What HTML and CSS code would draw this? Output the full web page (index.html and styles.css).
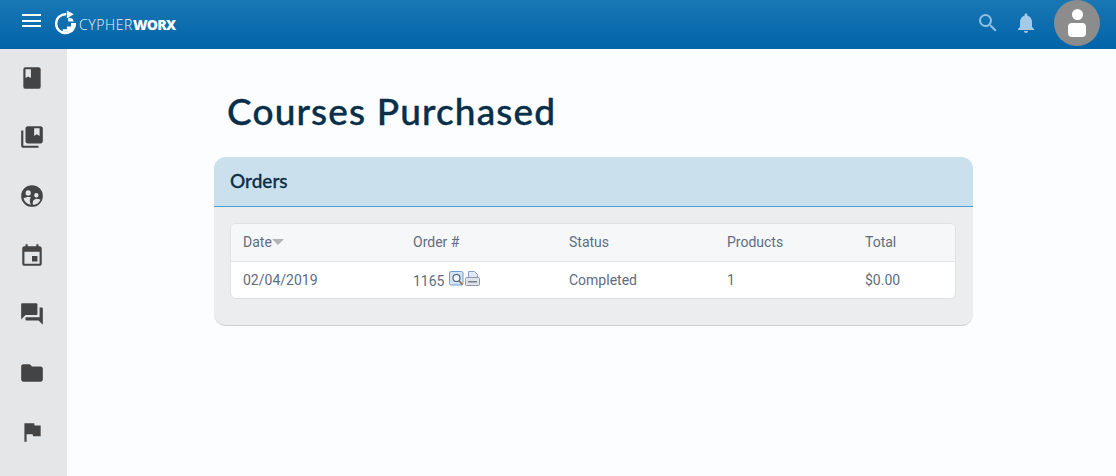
FILE: index.html
```html
<!DOCTYPE html>
<html lang="en">
<head>
<meta charset="utf-8">
<title>Courses Purchased</title>
<link rel="stylesheet" href="styles.css">
</head>
<body>
<header class="topbar">
  <div class="brand">
    <button class="burger" aria-label="Menu"><span></span><span></span><span></span></button>
    <div class="logo">
      <svg class="logo-mark" width="25" height="26" viewBox="0 0 36 36">
        <path d="M19 5.500A13.500 13.500 0 1 0 31.500 18" fill="none" stroke="#fff" stroke-width="3.400"/>
        <path d="M20 0l10 5.500-10 5.500z" fill="#fff"/>
        <path d="M8 30.500h20a13 13 0 0 0 3-12.500h-5v5h-6v4h-6v3z" fill="#fff"/>
        <path d="M22 10l6 2 2 4h-8z" fill="#fff"/>
      </svg>
      <span class="logo-text">CYPHER<b>WORX</b></span>
    </div>
  </div>
  <div class="tools">
    <svg class="tool" width="24" height="24" viewBox="0 0 24 24"><path fill="#8fc0e2" d="M15.5 14h-.79l-.28-.27A6.470 6.470 0 0 0 16 9.500 6.500 6.500 0 1 0 9.500 16c1.610 0 3.090-.59 4.230-1.570l.27.28v.79l5 4.990L20.490 19l-4.990-5zm-6 0C7.010 14 5 11.990 5 9.500S7.010 5 9.500 5 14 7.010 14 9.500 11.990 14 9.500 14z"/></svg>
    <svg class="tool" width="24" height="24" viewBox="0 0 24 24"><path fill="#a3cbe8" d="M12 22c1.100 0 2-.9 2-2h-4c0 1.100.9 2 2 2zm6-6v-5c0-3.070-1.630-5.640-4.500-6.320V4c0-.83-.67-1.500-1.500-1.500s-1.500.67-1.500 1.500v.68C7.640 5.360 6 7.920 6 11v5l-2 2v1h16v-1l-2-2z"/></svg>
    <div class="avatar">
      <span class="avatar-head"></span>
      <span class="avatar-body"></span>
    </div>
  </div>
</header>
<div class="shell">
  <nav class="rail">
    <svg width="26" height="26" viewBox="0 0 24 24"><path fill="#444" d="M18 2H6a2 2 0 0 0-2 2v16a2 2 0 0 0 2 2h12a2 2 0 0 0 2-2V4a2 2 0 0 0-2-2zM6 4h5v8l-2.500-1.500L6 12V4z"/></svg>
    <svg width="26" height="26" viewBox="0 0 24 24"><path fill="#444" d="M4 6H2v14c0 1.100.9 2 2 2h14v-2H4V6zm16-4H8c-1.100 0-2 .9-2 2v12c0 1.100.9 2 2 2h12c1.100 0 2-.9 2-2V4c0-1.100-.9-2-2-2zm-1 9-2.500-1.500L14 11V4h5v7z"/></svg>
    <svg width="26" height="26" viewBox="0 0 24 24"><path fill="#444" d="M12 2a10 10 0 1 0 0 20 10 10 0 0 0 0-20zM8.500 6.800a2.400 2.400 0 1 1 0 4.800 2.400 2.400 0 0 1 0-4.800zm7.500 2.500a2 2 0 1 1 0 4 2 2 0 0 1 0-4zM11 20a8.100 8.100 0 0 1-6.800-5.600c1.300-.9 3-1.400 4.800-1.400.7 0 1.300.1 1.900.2-1.200 2-1.300 4.600.1 6.800zm2 .1c-.7-1.900-.3-4.600 3-5.500 1.300 0 2.600.3 3.800.8A8.100 8.100 0 0 1 13 20.100z"/></svg>
    <svg width="26" height="26" viewBox="0 0 24 24"><path fill="#444" d="M17 13h-5v5h5v-5zM16 2v2H8V2H6v2H5c-1.110 0-2 .9-2 2v14a2 2 0 0 0 2 2h14c1.100 0 2-.9 2-2V6c0-1.100-.9-2-2-2h-1V2h-2zm3 18H5V9h14v11z"/></svg>
    <svg width="26" height="26" viewBox="0 0 24 24"><path fill="#444" d="M21 6h-2v9H6v2c0 .55.45 1 1 1h11l4 4V7c0-.55-.45-1-1-1zm-4 6V3c0-.55-.45-1-1-1H3c-.55 0-1 .45-1 1v14l4-4h10c.55 0 1-.45 1-1z"/></svg>
    <svg width="26" height="26" viewBox="0 0 24 24"><path fill="#444" d="M10 4H4c-1.100 0-1.990.9-1.990 2L2 18c0 1.100.9 2 2 2h16c1.100 0 2-.9 2-2V8c0-1.100-.9-2-2-2h-8l-2-2z"/></svg>
    <svg width="26" height="26" viewBox="0 0 24 24"><path fill="#444" d="M14.400 6 14 4H5v17h2v-7h5.600l.4 2h7V6z"/></svg>
  </nav>
  <main class="content">
    <h1 class="title">Courses Purchased</h1>
    <section class="panel">
      <div class="panel-head">Orders</div>
      <div class="panel-body">
        <div class="card">
          <div class="row row-head">
            <div class="date">Date<span class="caret"></span></div>
            <div>Order #</div>
            <div>Status</div>
            <div>Products</div>
            <div>Total</div>
          </div>
          <div class="row row-data">
            <div>02/04/2019</div>
            <div class="order"><span class="order-num">1165</span>
              <svg class="mini" width="15" height="15" viewBox="0 0 15 15">
                <rect x=".5" y=".5" width="13.500" height="13.500" rx="1.500" fill="#d3e4f6" stroke="#6f9fd2"/>
                <circle cx="7.500" cy="7" r="3.500" fill="#f2f7fc" stroke="#3d5a78" stroke-width="1.100"/>
                <path d="M10 9.800l3.500 4" stroke="#9a6a2c" stroke-width="1.600"/>
              </svg>
              <svg class="mini" width="15" height="15" viewBox="0 0 15 15">
                <path d="M3.500.5h6l3 3v4h-9z" fill="#dde9f6" stroke="#7fa3cc"/>
                <rect x=".5" y="6.500" width="14" height="8" rx="1" fill="#dfe3e7" stroke="#8f9ba8"/>
                <rect x="3" y="10" width="9" height="1.500" fill="#77828d"/>
              </svg>
            </div>
            <div>Completed</div>
            <div>1</div>
            <div>$0.00</div>
          </div>
        </div>
      </div>
    </section>
  </main>
</div>
</body>
</html>
```

FILE: styles.css
```css
* { box-sizing: border-box; }
html, body { margin: 0; height: 100%; }
body {
  background: #fcfdff;
  font-family: Roboto, "Liberation Sans", sans-serif;
  overflow: hidden;
}
.topbar {
  height: 49px;
  background: linear-gradient(#1977b4, #0164a9);
  display: flex;
  justify-content: space-between;
  align-items: flex-start;
}
.brand { display: flex; align-items: flex-start; }
.burger {
  width: 19px;
  height: 13px;
  margin: 14px 0 0 22px;
  padding: 0;
  border: 0;
  background: none;
  display: flex;
  flex-direction: column;
  justify-content: space-between;
}
.burger span { display: block; height: 2px; background: #fff; }
.logo { display: flex; align-items: center; gap: 1px; margin: 9px 0 0 12px; height: 28px; }
.logo-text {
  font-family: "Open Sans", sans-serif;
  font-weight: 300;
  font-size: 14px;
  color: #eef5fa;
  letter-spacing: 0.600px;
  margin-top: 3px;
}
.logo-text b { font-weight: 800; color: #fff; letter-spacing: -0.750px; }
.tools { display: flex; align-items: center; height: 46px; margin-right: 16px; }
.tool { margin-right: 14px; }
.tool + .tool { margin-right: 16px; }
.avatar {
  width: 46px;
  height: 46px;
  border-radius: 50%;
  background: #8c8c8c;
  display: flex;
  flex-direction: column;
  align-items: center;
  padding-top: 9px;
}
.avatar-head { width: 11px; height: 11px; border-radius: 50%; background: #fff; }
.avatar-body { width: 18px; height: 14px; margin-top: 3px; border-radius: 4px; background: #fff; }
.shell { display: flex; height: 427px; }
.rail {
  width: 67px;
  flex: none;
  background: #e5e6e8;
  display: flex;
  flex-direction: column;
  align-items: center;
  gap: 33px;
  padding: 16px 3px 0 0;
}
.rail svg { display: block; }
.content { flex: 1; padding: 39px 143px 0 147px; }
.title {
  margin: 0 0 23px 13px;
  font-family: Lato, sans-serif;
  font-weight: 500;
  font-size: 37px;
  letter-spacing: 1.150px;
  -webkit-text-stroke: 0.4px #072f4a;
  line-height: 46px;
  color: #072f4a;
}
.panel {
  background: #ecedee;
  border-radius: 12px;
  border-bottom: 1px solid #cfcfcf;
  height: 169px;
  overflow: hidden;
}
.panel-head {
  height: 50px;
  background: #cae0ed;
  border-bottom: 1px solid #4d9dd1;
  padding: 13px 16px 0;
  font-family: Lato, sans-serif;
  font-weight: 500;
  font-size: 19px;
  -webkit-text-stroke: 0.3px #0b3049;
  line-height: 22px;
  color: #0b3049;
}
.panel-body { padding: 16px 17px 0 16px; }
.card {
  background: #fff;
  border: 1px solid #e0e1e3;
  border-radius: 6px;
  overflow: hidden;
  color: #5e6d80;
  font-size: 14px;
}
.row { display: grid; grid-template-columns: 170px 156px 158px 138px 1fr; padding-left: 12px; align-items: center; }
.row-head { height: 38px; padding-bottom: 2px; background: #f6f7f9; border-bottom: 1px solid #e3e4e6; }
.row-data { height: 36px; }
.date { display: flex; align-items: center; }
.caret {
  width: 0;
  height: 0;
  border: 6px solid transparent;
  border-top: 6px solid #b4b4b4;
  border-bottom: 0;
}
.order { display: flex; align-items: center; gap: 1px; }
.order-num { margin-top: 2px; margin-right: 4px; }
.mini { margin-top: -3px; }
```
